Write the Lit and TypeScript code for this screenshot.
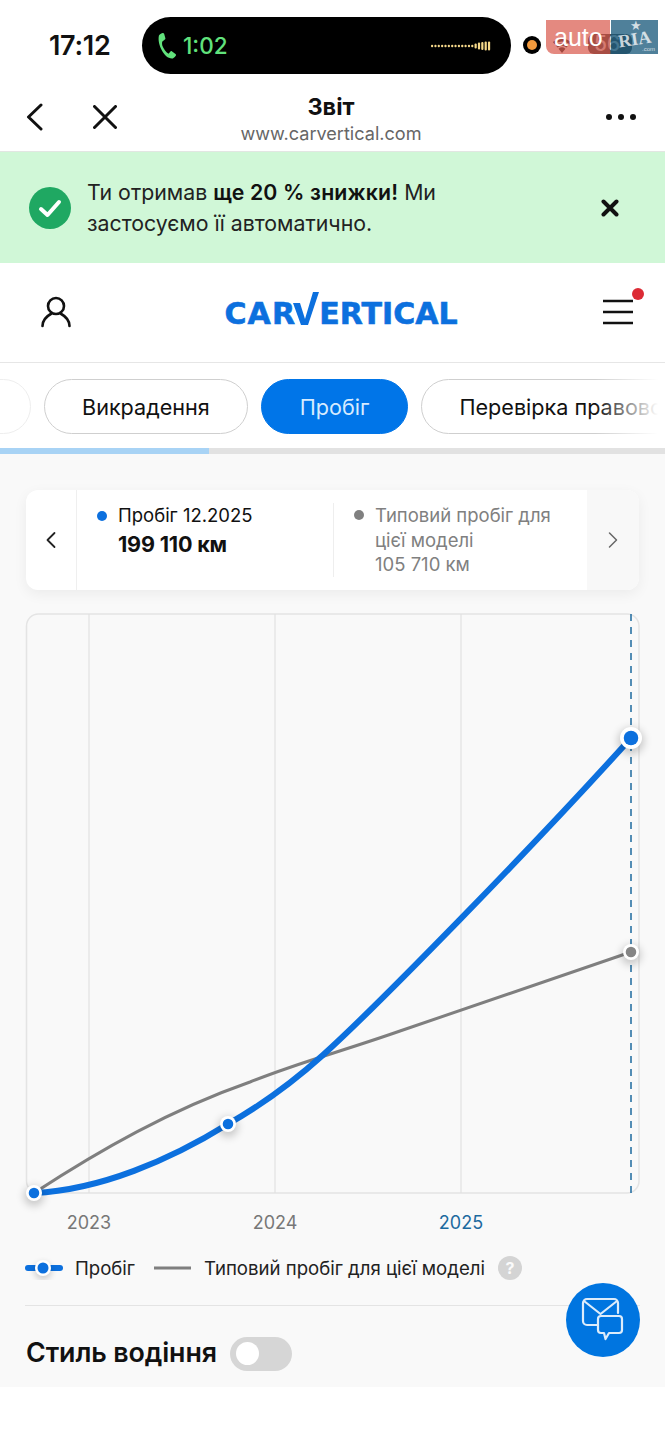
import { LitElement, html, css, svg } from "lit";
import { customElement } from "lit/decorators.js";

const bars = [
  ...Array.from({ length: 13 }, () => 2.5),
  5, 7, 8, 9, 9,
];

@customElement("app-root")
export class AppRoot extends LitElement {
  static styles = css`
    :host { display: block; position: relative; width: 665px; height: 1440px; background: #fff; overflow: hidden; font-family: Inter, "Noto Sans", sans-serif; color: #111; }
    * { box-sizing: border-box; }
    svg { display: block; flex: none; }

    .status { height: 90px; padding: 17px 0 0 49px; display: flex; align-items: flex-start; }
    .time { width: 93px; height: 57px; line-height: 57px; font-size: 27px; font-weight: 600; letter-spacing: -0.3px; }
    .island { width: 369px; height: 57px; background: #000; border-radius: 29px; display: flex; align-items: center; padding: 0 20px 0 10px; color: #61e27c; font-size: 22.500px; font-weight: 500; gap: 1px; }
    .island .wave { margin-left: auto; }
    .rec { width: 18px; height: 18px; border-radius: 50%; background: #000; margin: 19px 0 0 12px; display: flex; align-items: center; justify-content: center; }
    .rec i { display: block; width: 10px; height: 10px; border-radius: 50%; background: #f39a3d; }
    .sys { margin: 17px 0 0 9px; display: flex; align-items: center; gap: 14px; }
    .battery { width: 44px; height: 20px; border-radius: 6px; background: #555; color: rgba(255,255,255,.75); font-size: 21px; font-weight: 500; text-align: left; padding-left: 6px; line-height: 20px; }

    .watermark { position: absolute; left: 546px; top: 20px; display: flex; height: 34px; gap: 1px; }
    .wm-red { width: 64px; background: rgba(214, 74, 60, 0.65); border-radius: 0 0 0 8px; color: #fff; font: 500 25px/34px "Liberation Sans", sans-serif; padding-left: 8px; }
    .wm-teal { width: 47px; background: rgba(20, 85, 120, 0.75); color: rgba(255,255,255,.75); position: relative; font: 700 18px/38px "Liberation Serif", serif; text-align: center; }
    .wm-teal span { display: block; transform: rotate(-9deg); }
    .wm-teal em { position: absolute; left: 19px; top: -1px; font: 400 13px/14px "DejaVu Sans", sans-serif; }
    .wm-teal small { position: absolute; right: 3px; bottom: 1px; font: 400 6px/8px "Liberation Sans", sans-serif; }

    .nav { height: 61px; display: grid; grid-template-columns: 1fr auto 1fr; align-items: center; padding: 0 29px 7px 26px; }
    .nav-left { display: flex; align-items: center; gap: 50px; }
    .nav-mid { text-align: center; margin: 0 0 -5px; }
    .nav-title { font-size: 23.500px; font-weight: 700; line-height: 27px; }
    .nav-sub { font-size: 18.100px; line-height: 26px; color: #666; }
    .dots { justify-self: end; display: flex; gap: 6px; }
    .dots i { display: block; width: 6px; height: 6px; border-radius: 50%; background: #111; }

    .banner { height: 112px; background: #d0f7d7; border-top: 1px solid #e2e6e2; display: flex; align-items: center; padding: 0 46px 0 29px; }
    .banner p { margin: 0 0 0 16px; flex: 1; font-size: 21.300px; line-height: 31px; color: #222; font-weight: 400; }
    .banner b { font-weight: 600; color: #111; letter-spacing: .15px; }

    .head { height: 100px; border-bottom: 1px solid #e6e6e6; display: flex; align-items: center; justify-content: space-between; padding: 0 22px 0 40px; }
    .logo { display: flex; align-items: flex-end; color: #0c70de; font: 700 30px/22px "DejaVu Sans", sans-serif; -webkit-text-stroke: .6px #0c70de; height: 33px; margin-top: -8px; margin-left: 9px; }
    .logo span { display: block; height: 22px; line-height: 22px; }
    .logo .car { letter-spacing: 1.200px; }
    .logo .rest { letter-spacing: 0; }
    .logo svg { margin: 0 0 0 -3px; }
    .head svg { overflow: visible; }

    .tabs { position: relative; height: 85px; padding-top: 16px; display: flex; gap: 13px; overflow: hidden; }
    .pill { flex: none; height: 55px; border: 1.500px solid #cfcfcf; border-radius: 28px; padding: 0 37px; display: flex; align-items: center; font-size: 21.600px; background: #fff; white-space: nowrap; }
    .pill.ghost { width: 100px; margin-left: -69px; border-color: #eee; }
    .pill.on { background: #0075e8; border-color: #0075e8; color: #d6ebff; padding: 0 38px; }
    .fade { position: absolute; right: 0; top: 0; bottom: 0; width: 70px; background: linear-gradient(to right, rgba(255,255,255,0), #fff 90%); }

    .progress { height: 6px; background: #e2e2e2; }
    .progress i { display: block; width: 209px; height: 100%; background: #a8d3f5; }

    .main { background: #f9f9f9; padding: 36px 0 16px; height: 933px; }
    .card { margin: 0 26px; height: 100px; width: 613px; background: #fff; border-radius: 12px; box-shadow: 0 4px 14px rgba(0,0,0,.06); display: flex; overflow: hidden; }
    .arrow { width: 51px; flex: none; display: flex; align-items: center; justify-content: center; }
    .arrow.l { border-right: 1px solid #efefef; }
    .arrow.r { width: 52px; background: #f8f8f8; }
    .cell { position: relative; padding: 13px 0 0 41px; font-size: 18.500px; line-height: 25px; }
    .cell.a { width: 256px; }
    .cell.b { flex: 1; color: #808080; border-left: 1px solid #eee; margin: 13px 0; padding: 0 0 0 41px; line-height: 24.500px; }
    .cell .value { font-size: 21.600px; font-weight: 700; line-height: 32px; color: #111; letter-spacing: -0.2px; }
    .dot { position: absolute; left: 20px; top: 21px; width: 10px; height: 10px; border-radius: 50%; background: #0c70de; }
    .cell.b .dot { background: #808080; left: 20px; top: 7px; }

    .chart { margin-top: 10px; }
    .axis { font: 400 18px Inter, sans-serif; fill: #777; text-anchor: middle; }
    .axis.now { fill: #1d6a9f; }

    .legend { margin: 16px 25px 0; height: 24px; display: flex; align-items: center; font-size: 18.600px; color: #222; }
    .legend .t1 { margin: 0 19px 0 12px; }
    .legend .t2 { margin: 0 13px 0 13px; }
    .help { width: 24px; height: 24px; border-radius: 50%; background: #d4d4d4; color: #fafafa; font-size: 16px; font-weight: 700; text-align: center; line-height: 24px; }
    .rule { margin: 25px 25px 0; height: 1px; background: #e4e4e4; }
    .drive { margin: 31px 0 0 26px; height: 34px; display: flex; align-items: center; gap: 13px; font-size: 26.800px; font-weight: 600; letter-spacing: -0.1px; }
    .drive span { margin-top: -4px; }
    .toggle { width: 62px; height: 34px; border-radius: 17px; background: #d6d6d6; padding: 5px 0 0 6px; }
    .toggle i { display: block; width: 23px; height: 23px; border-radius: 50%; background: #fff; }

    .fab { position: absolute; left: 566px; top: 1283px; width: 74px; height: 74px; border-radius: 50%; background: #0075e0; display: flex; align-items: center; justify-content: center; }
  `;

  private marker(x: number, y: number, r = 8, color = "#0c70de") {
    return svg`
      <circle cx=${x} cy=${y + 3} r=${r + 2} fill="#000" opacity=".2" filter="url(#soft)"></circle>
      <circle cx=${x} cy=${y} r=${r} fill="#fff"></circle>
      <circle cx=${x} cy=${y} r=${r * 0.66} fill=${color}></circle>`;
  }

  render() {
    return html`
      <div class="status">
        <div class="time">17:12</div>
        <div class="island">
          <svg width="30" height="30" viewBox="0 0 24 24" fill="#61e27c"><path d="M8.200 11.500c1.200 3 2.700 5 5 6.700l1.600-1.900c.3-.3.7-.4 1-.2l3 2.200c.5.4.6 1 .2 1.400-1 1.300-2.100 2.300-3.100 2.300C9.800 22 4 10.600 5.500 3.800 5.700 2.900 7 2 8.500 1.600c.5-.1 1 .1 1.200.6l1 3.600c.1.400 0 .8-.4 1l-2 1.500c-.4.800-.3 2 .0 3.200z"></path></svg>
          <span>1:02</span>
          <svg class="wave" width="60" height="12" viewBox="0 0 60 12">
            ${bars.map((h, i) => svg`<rect x=${i * 3.35} y=${6 - h / 2} width="2.200" height=${h} rx="1" fill="#f6d98a"></rect>`)}
          </svg>
        </div>
        <div class="rec"><i></i></div>
        <div class="sys">
          <svg width="24" height="18" viewBox="0 0 24 18" fill="#444"><path d="M12 18l-3.500-4.200a5.500 5.500 0 0 1 7 0zM5.800 10.500a10 10 0 0 1 12.400 0l-1.700 2a7.400 7.400 0 0 0-9 0zM2.800 7a15 15 0 0 1 18.400 0l-1.700 2a12.300 12.300 0 0 0-15 0z"></path></svg>
          <div class="battery">56</div>
        </div>
      </div>
      <div class="watermark" aria-hidden="true">
        <div class="wm-red">auto</div>
        <div class="wm-teal"><em>★</em><span>RIA</span><small>.com</small></div>
      </div>

      <div class="nav">
        <div class="nav-left">
          <svg width="17" height="28" viewBox="0 0 17 28" fill="none" stroke="#111" stroke-width="3" stroke-linecap="round" stroke-linejoin="round"><path d="M15 2 L2.500 14 L15 26"></path></svg>
          <svg width="24" height="24" viewBox="0 0 24 24" fill="none" stroke="#111" stroke-width="3" stroke-linecap="round"><path d="M1.500 1.500 L22.500 22.500 M22.500 1.500 L1.500 22.500"></path></svg>
        </div>
        <div class="nav-mid">
          <div class="nav-title">Звіт</div>
          <div class="nav-sub">www.carvertical.com</div>
        </div>
        <div class="dots"><i></i><i></i><i></i></div>
      </div>

      <div class="banner">
        <svg width="42" height="42" viewBox="0 0 42 42"><circle cx="21" cy="21" r="21" fill="#1fa862"></circle><path d="M12 22 L18.500 28 L30 15" fill="none" stroke="#fff" stroke-width="4" stroke-linecap="round" stroke-linejoin="round"></path></svg>
        <p>Ти отримав <b>ще 20 % знижки!</b> Ми<br />застосуємо її автоматично.</p>
        <svg width="18" height="18" viewBox="0 0 18 18" fill="none" stroke="#111" stroke-width="4" stroke-linecap="round"><path d="M2.500 2.500 L15.500 15.500 M15.500 2.500 L2.500 15.500"></path></svg>
      </div>

      <div class="head">
        <svg width="32" height="34" viewBox="0 0 32 34" fill="none" stroke="#111" stroke-width="2.600" stroke-linecap="round"><circle cx="16" cy="10" r="8"></circle><path d="M2.500 30 C2.500 24 7 20 11.500 17.500 M29.500 30 C29.500 24 25 20 20.500 17.500"></path></svg>
        <div class="logo">
          <span class="car">CAR</span>
          <svg width="26" height="33" viewBox="0 0 26 33"><path d="M0 11 H7 L12 27 L20 0 H26 L15 33 H8 Z" fill="#0c70de"></path></svg>
          <span class="rest">ERTICAL</span>
        </div>
        <svg width="42" height="44" viewBox="0 0 42 44">
          <path d="M2 10 H32 M2 21 H32 M2 32 H32" stroke="#111" stroke-width="2.500" fill="none"></path>
          <circle cx="37" cy="3" r="6" fill="#dc2b35"></circle>
        </svg>
      </div>

      <div class="tabs">
        <div class="pill ghost"></div>
        <div class="pill">Викрадення</div>
        <div class="pill on">Пробіг</div>
        <div class="pill">Перевірка правового статусу</div>
        <div class="fade"></div>
      </div>
      <div class="progress"><i></i></div>

      <div class="main">
        <div class="card">
          <div class="arrow l"><svg width="12" height="18" viewBox="0 0 12 18" fill="none" stroke="#222" stroke-width="1.800" stroke-linecap="round" stroke-linejoin="round"><path d="M9.500 2 L2.500 9 L9.500 16"></path></svg></div>
          <div class="cell a"><span class="dot"></span>Пробіг 12.2025<div class="value">199 110 км</div></div>
          <div class="cell b"><span class="dot"></span>Типовий пробіг для<br />цієї моделі<br />105 710 км</div>
          <div class="arrow r"><svg width="12" height="18" viewBox="0 0 12 18" fill="none" stroke="#666" stroke-width="1.500" stroke-linecap="round" stroke-linejoin="round"><path d="M2.500 2 L9.500 9 L2.500 16"></path></svg></div>
        </div>

        <svg class="chart" width="665" height="640" viewBox="0 600 665 640">
          <defs><filter id="soft" x="-100%" y="-100%" width="300%" height="300%"><feGaussianBlur stdDeviation="4"></feGaussianBlur></filter></defs>
          <path d="M26.500 1181 V626 a12 12 0 0 1 12-12 H627 a12 12 0 0 1 12 12 V1181 a12 12 0 0 1-12 12 H38.500 a12 12 0 0 1-12-12 Z" fill="#f9f9f9" stroke="#e4e4e4" stroke-width="1.500"></path>
          <path d="M89 614 V1193 M275 614 V1193 M461 614 V1193" stroke="#e2e2e2" stroke-width="1.200"></path>
          <path d="M631 614 V1193" stroke="#1d6a9f" stroke-width="1.500" stroke-dasharray="7 6"></path>
          <path d="M34 1193 C100 1150 170 1110 250 1082 C300 1062 340 1052 400 1031 L631 952" fill="none" stroke="#7f7f7f" stroke-width="3"></path>
          <path d="M34 1193 C100 1190 170 1160 228 1124 C258 1107 292 1083 323 1055 C375 1008 530 850 631 738" fill="none" stroke="#0c70de" stroke-width="6"></path>
          ${this.marker(631, 952, 8, "#858585")}
          ${this.marker(34, 1193)}
          ${this.marker(228, 1124)}
          ${this.marker(631, 738, 11)}
          <text class="axis" x="89" y="1229">2023</text>
          <text class="axis" x="275" y="1229">2024</text>
          <text class="axis now" x="461" y="1229">2025</text>
        </svg>

        <div class="legend">
          <svg width="38" height="24" viewBox="0 0 38 24">
            <defs><filter id="soft2" x="-100%" y="-100%" width="300%" height="300%"><feGaussianBlur stdDeviation="3"></feGaussianBlur></filter></defs>
            <path d="M3 12 H35" stroke="#0c70de" stroke-width="6" stroke-linecap="round"></path>
            <circle cx="18" cy="15" r="9" fill="#000" opacity=".16" filter="url(#soft2)"></circle>
            <circle cx="18" cy="12" r="8" fill="#fff"></circle><circle cx="18" cy="12" r="5.500" fill="#0c70de"></circle>
          </svg>
          <span class="t1">Пробіг</span>
          <svg width="37" height="4" viewBox="0 0 37 4"><path d="M0 2 H37" stroke="#7f7f7f" stroke-width="3"></path></svg>
          <span class="t2">Типовий пробіг для цієї моделі</span>
          <div class="help">?</div>
        </div>
        <div class="rule"></div>
        <div class="drive"><span>Стиль водіння</span><div class="toggle"><i></i></div></div>
      </div>

      <div class="fab">
        <svg width="44" height="46" viewBox="0 0 44 46" fill="none" stroke="#dcecfb" stroke-width="2.200" stroke-linejoin="round" stroke-linecap="round">
          <path d="M16 28 H6 a4 4 0 0 1-4-4 V6 a4 4 0 0 1 4-4 H33 a4 4 0 0 1 4 4 V16"></path>
          <path d="M3 4 L19.500 17 L36 4"></path>
          <path d="M20 19 H38 a3 3 0 0 1 3 3 V33 a3 3 0 0 1-3 3 H28 L24.500 42 L23 36 H20 a3 3 0 0 1-3-3 V22 a3 3 0 0 1 3-3 Z"></path>
        </svg>
      </div>
    `;
  }
}
